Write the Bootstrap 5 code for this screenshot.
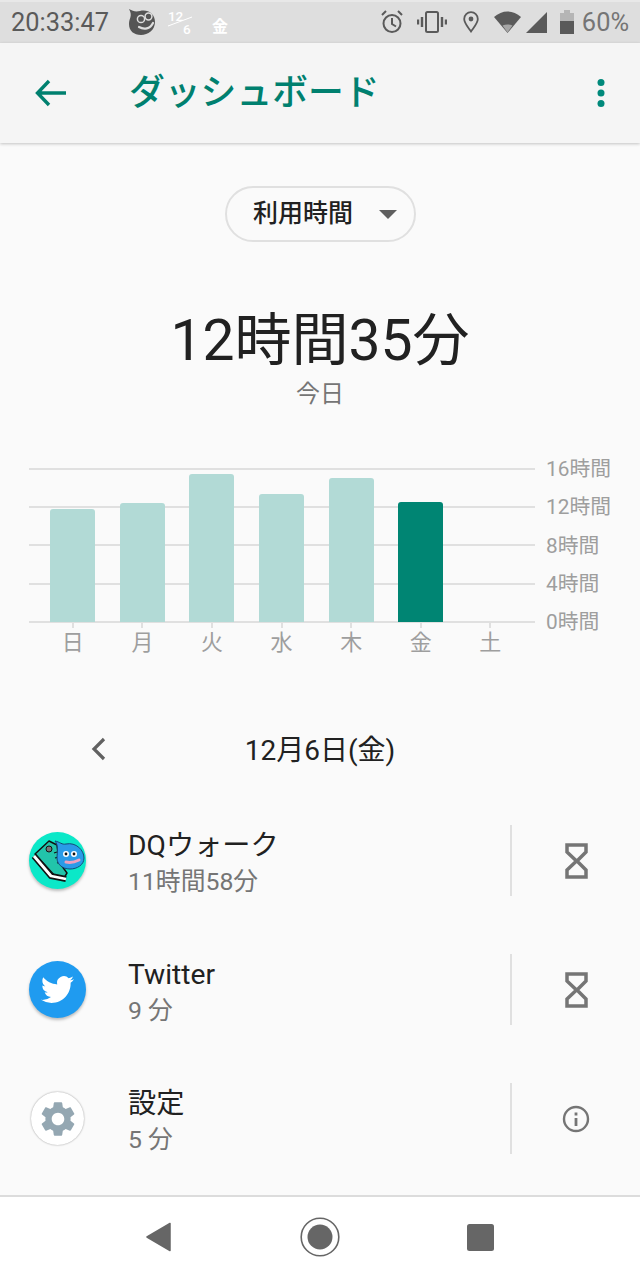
<!DOCTYPE html>
<html lang="ja">
<head>
  <meta charset="UTF-8" />
  <meta name="viewport" content="width=device-width, initial-scale=1.0"/>
  <title>ダッシュボード</title>
  <link href="https://cdn.jsdelivr.net/npm/bootstrap@5.3.0/dist/css/bootstrap.min.css" rel="stylesheet"/>
  <style>
    html, body { height: 100%; }
    body {
      width: 640px; height: 1280px; overflow: hidden; background: #fafafa;
      font-family: Roboto, "Noto Sans CJK JP", sans-serif; color: #212121;
    }
    .status-bar { height: 43px; background: #dedede; border-top: 2px solid #e8e8e8; color: #5a5a5a; font-size: 25.4px; padding: 0 11px; }
    .status-slime { margin-left: 19px; }
    .status-date { width: 24px; height: 26px; margin-left: 12px; color: #fff; font-size: 13.5px; font-weight: 500; line-height: 13px; position: relative; }
    .status-date .d2 { padding-left: 15px; }
    .status-slash { position: absolute; left: 0; top: 6px; }
    .status-day { color: #fff; font-size: 16px; font-weight: 700; margin-left: 20px; margin-top: 8px; }
    .status-pct { color: #757575; margin-left: 8px; }
    .ic-vibrate { margin-left: 14px; }
    .ic-pin { margin-left: 16px; }
    .ic-wifi { margin-left: 15px; }
    .ic-signal { margin-left: 5px; }
    .ic-battery { margin-left: 13px; }
    .app-bar { height: 100px; background: #f5f5f5; box-shadow: 0 1px 3px rgba(0,0,0,.22); position: relative; }
    .app-title { color: #00806f; font-size: 35.8px; font-weight: 500; line-height: 1; margin-left: 63px; margin-top: 2px; }
    .app-back { margin-left: 35px; }
    .app-more { margin-right: 35px; }
    .picker-wrap { padding-top: 43px; }
    .picker {
      width: 191px; height: 56px; border: 2px solid #e0e0e0; border-radius: 28px; background: #fafafa;
      padding-left: 10px; font-size: 25px; font-weight: 500; color: #212121;
    }
    .caret-down { width: 0; height: 0; border-left: 9px solid transparent; border-right: 9px solid transparent; border-top: 9px solid #5f5f5f; margin-left: 26px; }
    .total { font-size: 57px; line-height: 70px; margin-top: 64px; }
    .today { font-size: 24px; line-height: 30px; color: #757575; margin-top: 3px; }

    .chart { margin: 59px 0 0 29px; }
    .plot {
      width: 506px; height: 155px; padding: 0 0 1px 9px;
      display: grid; grid-template-columns: repeat(7, 69.6px); align-items: end;
      background-image: repeating-linear-gradient(#e0e0e0 0 2px, transparent 2px 38.25px);
    }
    .bar-cell { display: flex; justify-content: center; }
    .bar { width: 45px; background: #b2dad6; border-radius: 3px 3px 0 0; }
    .bar-now { background: #008573; }
    .y-labels { height: 173px; margin: -9px -9px -9px 11px; font-size: 20.8px; line-height: 20px; color: #9e9e9e; }
    .days { width: 506px; display: grid; grid-template-columns: repeat(7, 69.6px); padding-left: 9px; font-size: 22px; color: #9e9e9e; line-height: 30px; text-align: center; }
    .tick { width: 2px; height: 5px; background: #e0e0e0; margin: 0 auto; }

    .date-row { height: 40px; margin-top: 73px; font-size: 28px; line-height: 40px; position: relative; }
    .date-back { position: absolute; left: 91px; top: 6px; }
    .app-list { margin-top: 25px; }
    .app-row { height: 129px; padding-left: 29px; }
    .app-icon { width: 57px; height: 57px; border-radius: 50%; box-shadow: 0 2px 3px rgba(0,0,0,.25); flex: none; }
    .app-icon-plain { width: 53px; height: 53px; margin: 0 2px; background: #fff; box-shadow: 0 0 2px rgba(0,0,0,.4); }
    .app-text { margin-left: 42px; width: 382px; padding-top: 6px; }
    .app-name { font-size: 28.2px; line-height: 36px; color: #212121; }
    .app-time { font-size: 24.8px; line-height: 36px; color: #757575; }
    .app-divider { width: 2px; height: 71px; background: #e0e0e0; flex: none; }
    .app-action { width: 128px; }
    .nav-bar { position: absolute; left: 0; right: 0; top: 1195px; height: 85px; padding-bottom: 3px; background: #fff; border-top: 2px solid #dcdcdc; }
    .nav-back { margin-left: 146px; }
    .nav-home { margin-left: 129px; }
    .nav-recent { margin-left: 127px; }
  </style>
</head>
<body>
  <div class="status-bar d-flex align-items-center">
    <span>20:33:47</span>
    <svg class="status-slime" width="28" height="27" viewBox="0 0 28 27">
      <path d="M1 0C5 2 7 3 12 2c8-2 15 3 15 11 0 8-7 13-14 13C6 26 1 22 1 15 1 9 5 7 1 0z" fill="#555"/>
      <circle cx="13" cy="10" r="3.600" fill="none" stroke="#ddd" stroke-width="1.500"/><circle cx="20.500" cy="7.500" r="3.400" fill="none" stroke="#ddd" stroke-width="1.500"/>
      <path d="M11 18c5 3 11 2 14-4" stroke="#ddd" stroke-width="2.200" fill="none" stroke-linecap="round"/>
    </svg>
    <div class="status-date">
      <div>12</div>
      <svg class="status-slash" width="26" height="14" viewBox="0 0 26 14"><path d="M0 10L24 1" stroke="#fff" stroke-width="1"/></svg>
      <div class="d2">6</div>
    </div>
    <span class="status-day">金</span>
    <div class="ms-auto d-flex align-items-center">
      <svg width="22" height="24" viewBox="0 0 22 24" fill="none" stroke="#5a5a5a" stroke-width="2"><circle cx="11" cy="13.500" r="8.500"/><path d="M11 8v6l4 2.500M1 5l4-4M21 5l-4-4"/></svg>
      <svg class="ic-vibrate" width="30" height="22" viewBox="0 0 30 22" fill="none" stroke="#5a5a5a" stroke-width="2"><rect x="9" y="1" width="12" height="20" rx="1.500"/><path d="M5 6v10M1 8.500v5M25 6v10M29 8.500v5" stroke-width="2.400"/></svg>
      <svg class="ic-pin" width="16" height="22" viewBox="0 0 16 22" fill="none" stroke="#5a5a5a" stroke-width="1.800"><path d="M8 20.500C4.500 15.500 1.200 12 1.200 8a6.800 6.800 0 0 1 13.600 0c0 4-3.300 7.500-6.800 12.500z"/><circle cx="8" cy="8" r="2.400" fill="#5a5a5a" stroke="none"/></svg>
      <svg class="ic-wifi" width="27" height="22" viewBox="0 0 27 22"><path d="M0 6C8-1.500 19-1.500 27 6L13.500 22z" fill="#5a5a5a"/><path d="M8.500 14.500c3-1.500 7-1.500 10 0l-5 7z" fill="#a5a5a5"/></svg>
      <svg class="ic-signal" width="21" height="21" viewBox="0 0 21 21"><path d="M0 21L21 0v21z" fill="#5a5a5a"/></svg>
      <svg class="ic-battery" width="14" height="24" viewBox="0 0 14 24"><path d="M4 0h6v3h4v21H0V3h4z" fill="#b5b5b5"/><rect y="11" width="14" height="13" fill="#5a5a5a"/></svg>
      <span class="status-pct">60%</span>
    </div>
  </div>

  <div class="app-bar d-flex align-items-center">
    <svg class="app-back" width="31" height="28" viewBox="0 0 31 28" fill="none" stroke="#00806f" stroke-width="3.400"><path d="M31 14H3M14 2L2.500 14 14 26"/></svg>
    <span class="app-title">ダッシュボード</span>
    <svg class="app-more ms-auto" width="8" height="28" viewBox="0 0 8 28" fill="#00897b"><circle cx="4" cy="3.500" r="3.500"/><circle cx="4" cy="14" r="3.500"/><circle cx="4" cy="24.500" r="3.500"/></svg>
  </div>

  <div class="picker-wrap d-flex justify-content-center">
    <div class="picker d-flex align-items-center justify-content-center"><span>利用時間</span><span class="caret-down"></span></div>
  </div>

  <div class="total text-center">12時間35分</div>
  <div class="today text-center">今日</div>

  <div class="chart">
    <div class="d-flex">
      <div class="plot" id="plot"></div>
      <div class="y-labels d-flex flex-column justify-content-between">
        <span>16時間</span><span>12時間</span><span>8時間</span><span>4時間</span><span>0時間</span>
      </div>
    </div>
    <div class="days" id="days"></div>
  </div>

  <div class="date-row text-center">
    <svg class="date-back" width="18" height="24" viewBox="0 0 18 24" fill="none" stroke="#616161" stroke-width="3.200"><path d="M13 2L3 12l10 10"/></svg>
    12月6日(金)
  </div>

  <div class="app-list">
    <div class="app-row d-flex align-items-center">
      <div class="app-icon" style="background:#0be8c8">
        <svg width="57" height="57" viewBox="0 0 57 57">
          <path d="M6 22L20 9l8 4 2 17 8 11-3 5-9-2z" fill="#22c4aa" stroke="#111" stroke-width="1.500" stroke-linejoin="round"/>
          <path d="M5 24l17 20 15 3" fill="none" stroke="#111" stroke-width="6" stroke-linejoin="round"/>
          <path d="M5 24l17 20 15 3" fill="none" stroke="#fff" stroke-width="2.800" stroke-linejoin="round"/>
          <circle cx="20" cy="17" r="3" fill="#777" stroke="#111" stroke-width="1"/>
          <path d="M25 21l3-1M26 26l4-1M28 31l4-1" stroke="#111" stroke-width="1.200"/>
          <path d="M26 9c5 1 7 4 11 3 10-2 18 6 18 14 0 7-7 11-14 11-8 0-13-5-13-11 0-6 2-12-2-17z" fill="#2a9be8" stroke="#134a78" stroke-width="1"/>
          <circle cx="37" cy="22" r="3" fill="#fff"/><circle cx="45" cy="22" r="3" fill="#fff"/>
          <circle cx="37" cy="22" r="1.400" fill="#111"/><circle cx="45" cy="22" r="1.400" fill="#111"/>
          <path d="M37 30c4 1 9 0 13-2" stroke="#f0a0c0" stroke-width="3" fill="none" stroke-linecap="round"/>
        </svg>
      </div>
      <div class="app-text"><div class="app-name">DQウォーク</div><div class="app-time">11時間58分</div></div>
      <div class="app-divider"></div>
      <div class="app-action d-flex justify-content-center">
        <svg width="23" height="36" viewBox="0 0 23 36" fill="none" stroke="#757575" stroke-width="3.500"><path d="M2 2h19v7l-9 9 9 9v7H2v-7l9.500-9L2 9z"/></svg>
      </div>
    </div>
    <div class="app-row d-flex align-items-center">
      <div class="app-icon d-flex align-items-center justify-content-center" style="background:#1f9bf0">
        <svg width="33" height="33" viewBox="0 0 24 24" fill="#fff"><path d="M23.953 4.57a10 10 0 01-2.825.775 4.958 4.958 0 002.163-2.723c-.951.555-2.005.959-3.127 1.184a4.92 4.92 0 00-8.384 4.482C7.69 8.095 4.067 6.13 1.64 3.162a4.822 4.822 0 00-.666 2.475c0 1.71.87 3.213 2.188 4.096a4.904 4.904 0 01-2.228-.616v.06a4.923 4.923 0 003.946 4.827 4.996 4.996 0 01-2.212.085 4.936 4.936 0 004.604 3.417 9.867 9.867 0 01-6.102 2.105c-.39 0-.779-.023-1.17-.067a13.995 13.995 0 007.557 2.209c9.053 0 13.998-7.496 13.998-13.985 0-.21 0-.42-.015-.63A9.935 9.935 0 0024 4.59z"/></svg>
      </div>
      <div class="app-text"><div class="app-name">Twitter</div><div class="app-time">9 分</div></div>
      <div class="app-divider"></div>
      <div class="app-action d-flex justify-content-center">
        <svg width="23" height="36" viewBox="0 0 23 36" fill="none" stroke="#757575" stroke-width="3.500"><path d="M2 2h19v7l-9 9 9 9v7H2v-7l9.500-9L2 9z"/></svg>
      </div>
    </div>
    <div class="app-row d-flex align-items-center">
      <div class="app-icon app-icon-plain d-flex align-items-center justify-content-center">
        <svg width="42" height="42" viewBox="0 0 24 24"><path fill="#94a7b2" d="M19.14 12.94c.04-.3.06-.61.06-.94 0-.32-.02-.64-.07-.94l2.03-1.58c.18-.14.23-.41.12-.61l-1.92-3.32c-.12-.22-.37-.29-.59-.22l-2.39.96c-.5-.38-1.03-.7-1.62-.94l-.36-2.54c-.04-.24-.24-.41-.48-.41h-3.84c-.24 0-.43.17-.47.41l-.36 2.54c-.59.24-1.13.57-1.62.94l-2.39-.96c-.22-.08-.47 0-.59.22L2.740 8.870c-.12.21-.08.47.12.61l2.03 1.58c-.05.3-.09.63-.09.94s.02.64.07.94l-2.03 1.58c-.18.14-.23.41-.12.61l1.920 3.320c.12.22.37.29.59.22l2.390-.96c.5.38 1.030.7 1.620.94l.36 2.540c.05.24.24.41.48.41h3.840c.24 0 .44-.17.47-.41l.36-2.540c.59-.24 1.130-.56 1.620-.94l2.390.96c.22.08.47 0 .59-.22l1.920-3.320c.12-.22.07-.47-.12-.61l-2.010-1.580zM12 15.600c-1.980 0-3.600-1.620-3.600-3.600s1.620-3.600 3.600-3.600 3.600 1.620 3.600 3.600-1.620 3.600-3.600 3.600z"/></svg>
      </div>
      <div class="app-text"><div class="app-name">設定</div><div class="app-time">5 分</div></div>
      <div class="app-divider"></div>
      <div class="app-action d-flex justify-content-center">
        <svg width="28" height="28" viewBox="0 0 28 28" fill="none" stroke="#757575" stroke-width="2.400"><circle cx="14" cy="14" r="12"/><path d="M14 13v8" stroke-width="2.800"/><path d="M14 7.500v3" stroke-width="2.800"/></svg>
      </div>
    </div>
  </div>

  <div class="nav-bar d-flex align-items-center">
    <svg class="nav-back" width="25" height="30" viewBox="0 0 25 30" fill="#666"><path d="M24 1.500v27L1 15z" stroke="#666" stroke-width="1.500" stroke-linejoin="round"/></svg>
    <svg class="nav-home" width="40" height="40" viewBox="0 0 40 40"><circle cx="20" cy="20" r="18.800" fill="none" stroke="#666" stroke-width="1.600"/><circle cx="20" cy="20" r="12.500" fill="#666"/></svg>
    <svg class="nav-recent" width="27" height="27" viewBox="0 0 27 27"><rect width="27" height="27" rx="2.500" fill="#666"/></svg>
  </div>

  <script src="https://cdn.jsdelivr.net/npm/bootstrap@5.3.0/dist/js/bootstrap.bundle.min.js"></script>
  <script>
    // bar heights in px, today's bar is index 5
    const hours = [113, 119, 148, 128, 144, 120, 0];
    const dayNames = ["日", "月", "火", "水", "木", "金", "土"];
    document.getElementById("plot").innerHTML = hours.map((h, i) =>
      `<div class="bar-cell"><div class="bar ${i === 5 ? "bar-now" : ""}" style="height:${h}px"></div></div>`).join("");
    document.getElementById("days").innerHTML = dayNames.map(d =>
      `<div><div class="tick"></div>${d}</div>`).join("");
  </script>
</body>
</html>
